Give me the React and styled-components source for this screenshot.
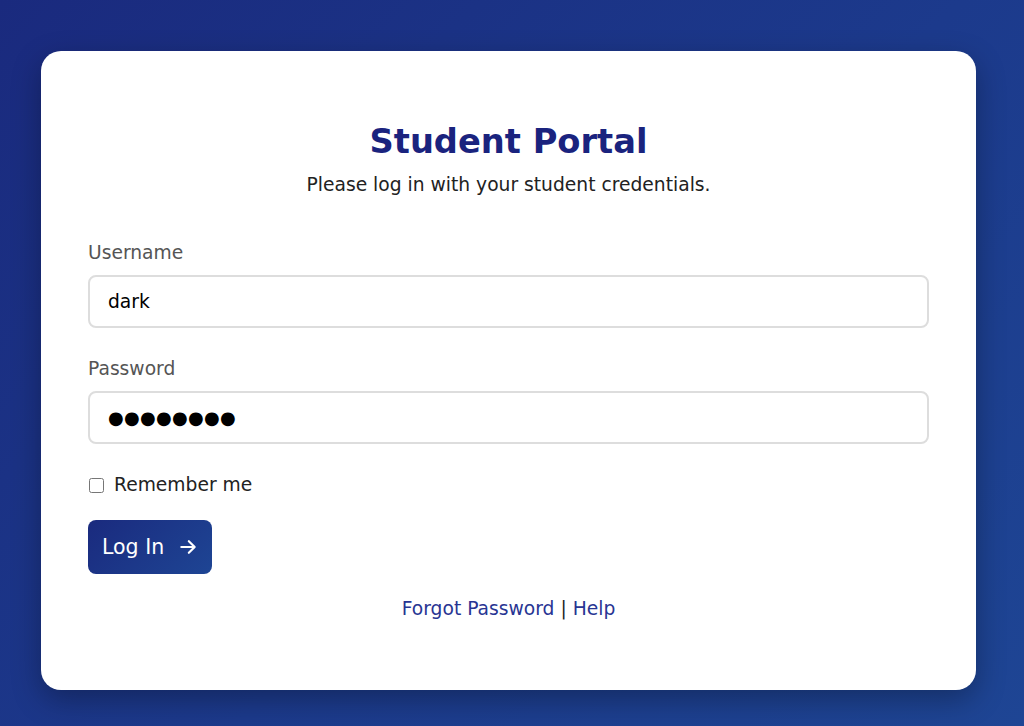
import React, { useState } from 'react';
import styled, { createGlobalStyle } from 'styled-components';

const GlobalStyle = createGlobalStyle`
  html, body {
    margin: 0;
    padding: 0;
  }
  body {
    font-family: "DejaVu Sans", Verdana, sans-serif;
    background: linear-gradient(135deg, #1a2a7e 0%, #1c3a8c 55%, #1e4594 100%);
    min-height: 726px;
  }
  * { box-sizing: border-box; }
`;

const Page = styled.div`
  min-height: 726px;
  padding: 51px 48px 36px 41px;
`;

const Card = styled.div`
  width: 935px;
  height: 639px;
  background: #fff;
  border-radius: 20px;
  box-shadow: 0 10px 30px rgba(0, 0, 0, 0.3);
  padding: 71px 47px 0;
`;

const Title = styled.h1`
  margin: 0;
  text-align: center;
  color: #1a237e;
  font-size: 33.7px;
  font-weight: bold;
  line-height: 40px;
`;

const Subtitle = styled.p`
  margin: 12px 0 0;
  text-align: center;
  color: #222;
  font-size: 18.7px;
  line-height: 22px;
`;

const Form = styled.form`
  margin-top: 46px;
  display: flex;
  flex-direction: column;
`;

const Field = styled.div`
  display: flex;
  flex-direction: column;
  gap: 11px;
  margin-bottom: 30px;
`;

const Label = styled.label`
  color: #555;
  font-size: 18.7px;
  line-height: 22px;
`;

const Input = styled.input`
  width: 100%;
  height: 53px;
  border: 2px solid #ddd;
  border-radius: 8px;
  padding: 0 18px;
  font-family: "DejaVu Sans", Verdana, sans-serif;
  font-size: ${p => (p.$masked ? '18px' : '18.7px')};
  letter-spacing: ${p => (p.$masked ? '0.3px' : 'normal')};
  color: #000;
  outline: none;
`;

const CheckRow = styled.label`
  display: flex;
  align-items: center;
  gap: 10px;
  font-size: 18.7px;
  line-height: 22px;
  color: #222;
`;

const Check = styled.input`
  width: 15px;
  height: 15px;
  margin: 0 0 0 1px;
`;

const Button = styled.button`
  margin-top: 24px;
  align-self: flex-start;
  height: 54px;
  padding: 0 14px;
  border: none;
  border-radius: 8px;
  background: linear-gradient(135deg, #1a2a7e 0%, #1e4594 100%);
  color: #fff;
  font-family: "DejaVu Sans", Verdana, sans-serif;
  font-size: 20.5px;
  display: flex;
  align-items: center;
  gap: 14px;
  cursor: pointer;
`;

const Links = styled.div`
  margin-top: 24px;
  text-align: center;
  font-size: 18.7px;
  line-height: 22px;
  color: #222;
`;

const A = styled.a`
  color: #283593;
  text-decoration: none;
`;

function Arrow() {
  return (
    <svg width="20" height="20" viewBox="0 0 24 24" fill="none" stroke="currentColor" strokeWidth="2.6" strokeLinecap="round" strokeLinejoin="round">
      <path d="M4 12h15" />
      <path d="M13 5l7 7-7 7" />
    </svg>
  );
}

export default function App() {
  const [user, setUser] = useState('dark');
  const [pass, setPass] = useState('password');

  return (
    <>
      <GlobalStyle />
      <Page>
        <Card>
          <Title>Student Portal</Title>
          <Subtitle>Please log in with your student credentials.</Subtitle>
          <Form onSubmit={e => e.preventDefault()}>
            <Field>
              <Label htmlFor="username">Username</Label>
              <Input id="username" value={user} onChange={e => setUser(e.target.value)} />
            </Field>
            <Field>
              <Label htmlFor="password">Password</Label>
              <Input
                id="password"
                $masked
                autoComplete="off"
                value={'●'.repeat(pass.length)}
                onChange={e => setPass('x'.repeat(e.target.value.length))}
              />
            </Field>
            <CheckRow>
              <Check type="checkbox" />
              Remember me
            </CheckRow>
            <Button type="submit">
              Log In <Arrow />
            </Button>
          </Form>
          <Links>
            <A href="#">Forgot Password</A> | <A href="#">Help</A>
          </Links>
        </Card>
      </Page>
    </>
  );
}
